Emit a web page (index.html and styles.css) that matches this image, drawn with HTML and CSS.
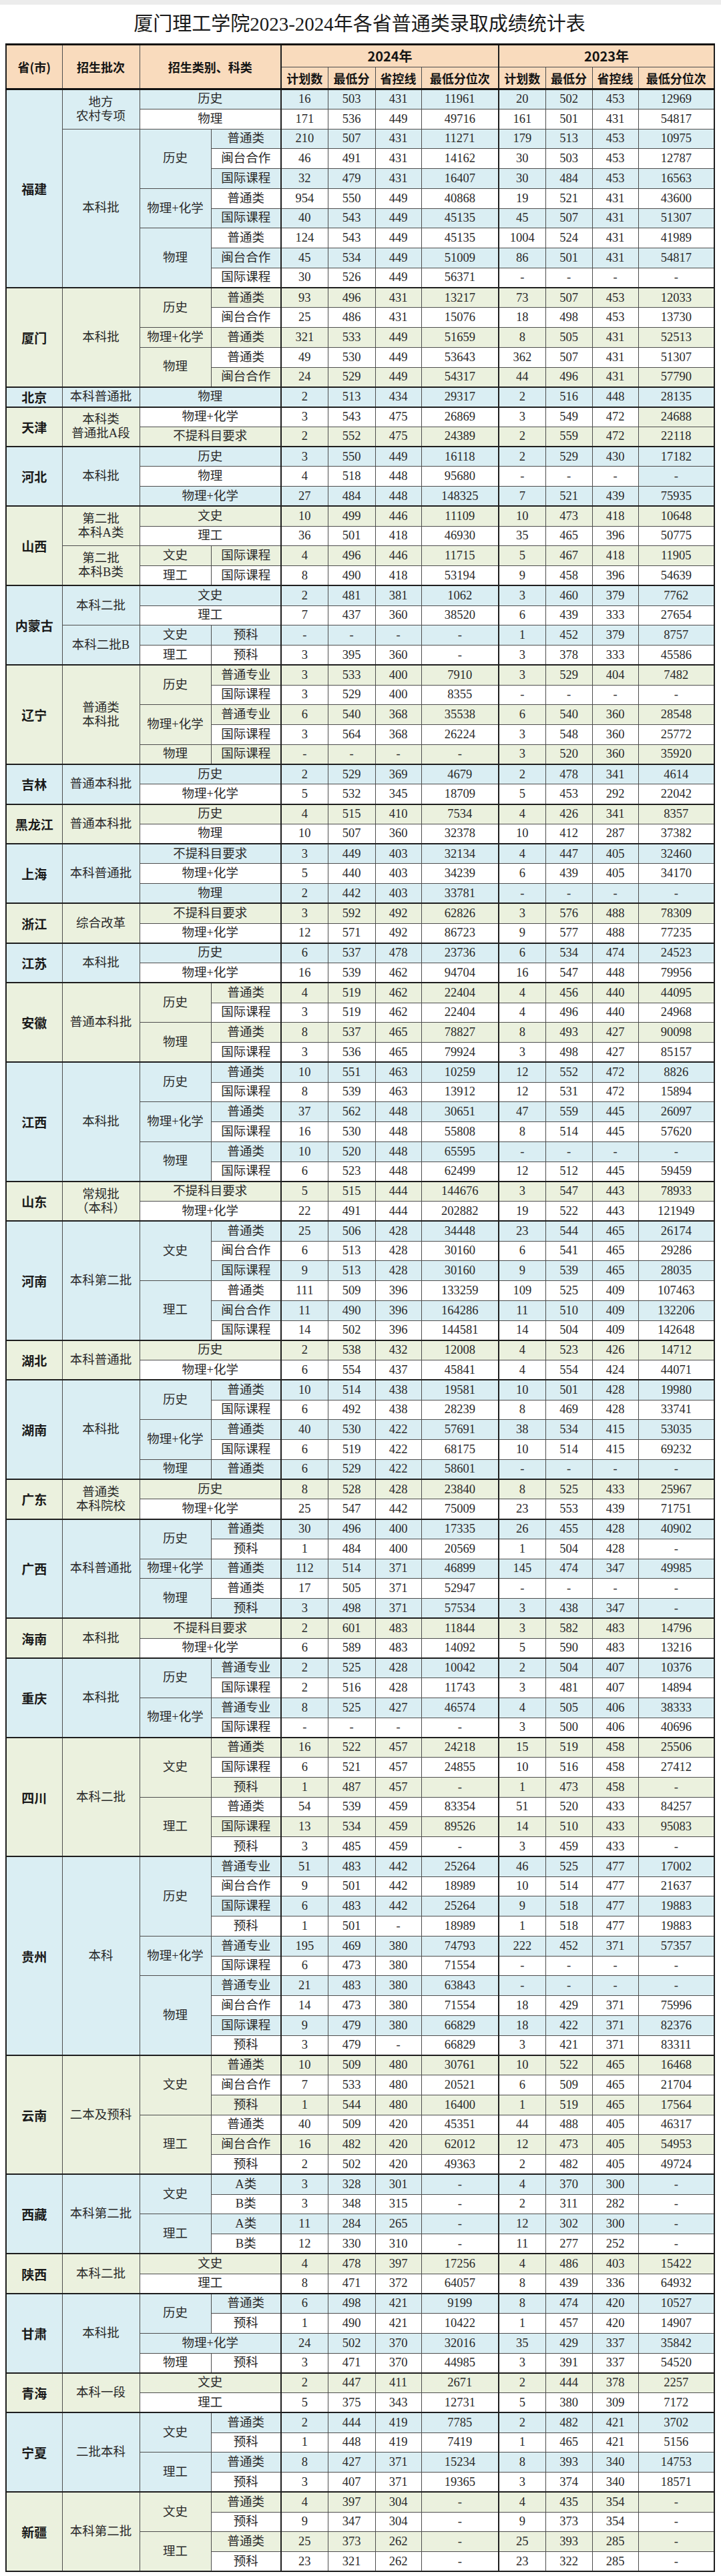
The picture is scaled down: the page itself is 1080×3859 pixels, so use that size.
FILE: index.html
```html
<!DOCTYPE html>
<html lang="zh-CN">
<head>
<meta charset="utf-8">
<title>厦门理工学院2023-2024年各省普通类录取成绩统计表</title>
<link rel="stylesheet" href="styles.css">
</head>
<body>
<div class="page">
<h1 class="title">厦门理工学院2023-2024年各省普通类录取成绩统计表</h1>
<table class="grid">
<colgroup><col class="k-prov"><col class="k-batch"><col class="k-cat"><col class="k-sub"><col class="k-n sep"><col class="k-n2"><col class="k-n3"><col class="k-r"><col class="k-n sep"><col class="k-n"><col class="k-n3"><col class="k-r2"></colgroup>
<thead>
<tr class="h1"><th rowspan="2">省(市)</th><th rowspan="2">招生批次</th><th rowspan="2" colspan="2">招生类别、科类</th><th colspan="4" class="yr">2024年</th><th colspan="4" class="yr">2023年</th></tr>
<tr class="h2"><th>计划数</th><th>最低分</th><th>省控线</th><th>最低分位次</th><th>计划数</th><th>最低分</th><th>省控线</th><th>最低分位次</th></tr>
</thead>
<tbody class="b">
<tr class="s"><td class="p g" rowspan="10">福建</td><td class="g" rowspan="2">地方<br>农村专项</td><td colspan="2">历史</td><td>16</td><td>503</td><td>431</td><td>11961</td><td>20</td><td>502</td><td>453</td><td>12969</td></tr>
<tr><td colspan="2">物理</td><td>171</td><td>536</td><td>449</td><td>49716</td><td>161</td><td>501</td><td>431</td><td>54817</td></tr>
<tr class="s"><td class="g" rowspan="8">本科批</td><td class="g" rowspan="3">历史</td><td>普通类</td><td>210</td><td>507</td><td>431</td><td>11271</td><td>179</td><td>513</td><td>453</td><td>10975</td></tr>
<tr><td>闽台合作</td><td>46</td><td>491</td><td>431</td><td>14162</td><td>30</td><td>503</td><td>453</td><td>12787</td></tr>
<tr class="s"><td>国际课程</td><td>32</td><td>479</td><td>431</td><td>16407</td><td>30</td><td>484</td><td>453</td><td>16563</td></tr>
<tr><td class="g" rowspan="2">物理+化学</td><td>普通类</td><td>954</td><td>550</td><td>449</td><td>40868</td><td>19</td><td>521</td><td>431</td><td>43600</td></tr>
<tr class="s"><td>国际课程</td><td>40</td><td>543</td><td>449</td><td>45135</td><td>45</td><td>507</td><td>431</td><td>51307</td></tr>
<tr><td class="g" rowspan="3">物理</td><td>普通类</td><td>124</td><td>543</td><td>449</td><td>45135</td><td>1004</td><td>524</td><td>431</td><td>41989</td></tr>
<tr class="s"><td>闽台合作</td><td>45</td><td>534</td><td>449</td><td>51009</td><td>86</td><td>501</td><td>431</td><td>54817</td></tr>
<tr><td>国际课程</td><td>30</td><td>526</td><td>449</td><td>56371</td><td>-</td><td>-</td><td>-</td><td>-</td></tr>
</tbody>
<tbody class="e">
<tr class="s"><td class="p g" rowspan="5">厦门</td><td class="g" rowspan="5">本科批</td><td class="g" rowspan="2">历史</td><td>普通类</td><td>93</td><td>496</td><td>431</td><td>13217</td><td>73</td><td>507</td><td>453</td><td>12033</td></tr>
<tr><td>闽台合作</td><td>25</td><td>486</td><td>431</td><td>15076</td><td>18</td><td>498</td><td>453</td><td>13730</td></tr>
<tr class="s"><td>物理+化学</td><td>普通类</td><td>321</td><td>533</td><td>449</td><td>51659</td><td>8</td><td>505</td><td>431</td><td>52513</td></tr>
<tr><td class="g" rowspan="2">物理</td><td>普通类</td><td>49</td><td>530</td><td>449</td><td>53643</td><td>362</td><td>507</td><td>431</td><td>51307</td></tr>
<tr class="s"><td>闽台合作</td><td>24</td><td>529</td><td>449</td><td>54317</td><td>44</td><td>496</td><td>431</td><td>57790</td></tr>
</tbody>
<tbody class="b">
<tr class="s"><td class="p g">北京</td><td class="g">本科普通批</td><td colspan="2">物理</td><td>2</td><td>513</td><td>434</td><td>29317</td><td>2</td><td>516</td><td>448</td><td>28135</td></tr>
</tbody>
<tbody class="e">
<tr><td class="p g" rowspan="2">天津</td><td class="g" rowspan="2">本科类<br>普通批A段</td><td colspan="2">物理+化学</td><td>3</td><td>543</td><td>475</td><td>26869</td><td>3</td><td>549</td><td>472</td><td class="g">24688</td></tr>
<tr class="s"><td colspan="2">不提科目要求</td><td>2</td><td>552</td><td>475</td><td>24389</td><td>2</td><td>559</td><td>472</td><td>22118</td></tr>
</tbody>
<tbody class="b">
<tr class="s"><td class="p g" rowspan="3">河北</td><td class="g" rowspan="3">本科批</td><td colspan="2">历史</td><td>3</td><td>550</td><td>449</td><td>16118</td><td>2</td><td>529</td><td>430</td><td>17182</td></tr>
<tr><td colspan="2">物理</td><td>4</td><td>518</td><td>448</td><td>95680</td><td>-</td><td>-</td><td>-</td><td class="g">-</td></tr>
<tr class="s"><td colspan="2">物理+化学</td><td>27</td><td>484</td><td>448</td><td>148325</td><td>7</td><td>521</td><td>439</td><td>75935</td></tr>
</tbody>
<tbody class="e">
<tr class="s"><td class="p g" rowspan="4">山西</td><td class="g" rowspan="2">第二批<br>本科A类</td><td colspan="2">文史</td><td>10</td><td>499</td><td>446</td><td>11109</td><td>10</td><td>473</td><td>418</td><td>10648</td></tr>
<tr><td colspan="2">理工</td><td>36</td><td>501</td><td>418</td><td>46930</td><td>35</td><td>465</td><td>396</td><td>50775</td></tr>
<tr class="s"><td class="g" rowspan="2">第二批<br>本科B类</td><td>文史</td><td>国际课程</td><td>4</td><td>496</td><td>446</td><td>11715</td><td>5</td><td>467</td><td>418</td><td>11905</td></tr>
<tr><td>理工</td><td>国际课程</td><td>8</td><td>490</td><td>418</td><td>53194</td><td>9</td><td>458</td><td>396</td><td>54639</td></tr>
</tbody>
<tbody class="b">
<tr class="s"><td class="p g" rowspan="4">内蒙古</td><td class="g" rowspan="2">本科二批</td><td colspan="2">文史</td><td>2</td><td>481</td><td>381</td><td>1062</td><td>3</td><td>460</td><td>379</td><td>7762</td></tr>
<tr><td colspan="2">理工</td><td>7</td><td>437</td><td>360</td><td>38520</td><td>6</td><td>439</td><td>333</td><td>27654</td></tr>
<tr class="s"><td class="g" rowspan="2">本科二批B</td><td>文史</td><td>预科</td><td>-</td><td>-</td><td>-</td><td>-</td><td>1</td><td>452</td><td>379</td><td>8757</td></tr>
<tr><td>理工</td><td>预科</td><td>3</td><td>395</td><td>360</td><td>-</td><td>3</td><td>378</td><td>333</td><td>45586</td></tr>
</tbody>
<tbody class="e">
<tr class="s"><td class="p g" rowspan="5">辽宁</td><td class="g" rowspan="5">普通类<br>本科批</td><td class="g" rowspan="2">历史</td><td>普通专业</td><td>3</td><td>533</td><td>400</td><td>7910</td><td>3</td><td>529</td><td>404</td><td>7482</td></tr>
<tr><td>国际课程</td><td>3</td><td>529</td><td>400</td><td>8355</td><td>-</td><td>-</td><td>-</td><td>-</td></tr>
<tr class="s"><td class="g" rowspan="2">物理+化学</td><td>普通专业</td><td>6</td><td>540</td><td>368</td><td>35538</td><td>6</td><td>540</td><td>360</td><td>28548</td></tr>
<tr><td>国际课程</td><td>3</td><td>564</td><td>368</td><td>26224</td><td>3</td><td>548</td><td>360</td><td>25772</td></tr>
<tr class="s"><td>物理</td><td>国际课程</td><td>-</td><td>-</td><td>-</td><td>-</td><td>3</td><td>520</td><td>360</td><td>35920</td></tr>
</tbody>
<tbody class="b">
<tr class="s"><td class="p g" rowspan="2">吉林</td><td class="g" rowspan="2">普通本科批</td><td colspan="2">历史</td><td>2</td><td>529</td><td>369</td><td>4679</td><td>2</td><td>478</td><td>341</td><td>4614</td></tr>
<tr><td colspan="2">物理+化学</td><td>5</td><td>532</td><td>345</td><td>18709</td><td>5</td><td>453</td><td>292</td><td>22042</td></tr>
</tbody>
<tbody class="e">
<tr class="s"><td class="p g" rowspan="2">黑龙江</td><td class="g" rowspan="2">普通本科批</td><td colspan="2">历史</td><td>4</td><td>515</td><td>410</td><td>7534</td><td>4</td><td>426</td><td>341</td><td>8357</td></tr>
<tr><td colspan="2">物理</td><td>10</td><td>507</td><td>360</td><td>32378</td><td>10</td><td>412</td><td>287</td><td>37382</td></tr>
</tbody>
<tbody class="b">
<tr class="s"><td class="p g" rowspan="3">上海</td><td class="g" rowspan="3">本科普通批</td><td colspan="2">不提科目要求</td><td>3</td><td>449</td><td>403</td><td>32134</td><td>4</td><td>447</td><td>405</td><td>32460</td></tr>
<tr><td colspan="2">物理+化学</td><td>5</td><td>440</td><td>403</td><td>34239</td><td>6</td><td>439</td><td>405</td><td>34170</td></tr>
<tr class="s"><td colspan="2">物理</td><td>2</td><td>442</td><td>403</td><td>33781</td><td>-</td><td>-</td><td>-</td><td>-</td></tr>
</tbody>
<tbody class="e">
<tr class="s"><td class="p g" rowspan="2">浙江</td><td class="g" rowspan="2">综合改革</td><td colspan="2">不提科目要求</td><td>3</td><td>592</td><td>492</td><td>62826</td><td>3</td><td>576</td><td>488</td><td>78309</td></tr>
<tr><td colspan="2">物理+化学</td><td>12</td><td>571</td><td>492</td><td>86723</td><td>9</td><td>577</td><td>488</td><td>77235</td></tr>
</tbody>
<tbody class="b">
<tr class="s"><td class="p g" rowspan="2">江苏</td><td class="g" rowspan="2">本科批</td><td colspan="2">历史</td><td>6</td><td>537</td><td>478</td><td>23736</td><td>6</td><td>534</td><td>474</td><td>24523</td></tr>
<tr><td colspan="2">物理+化学</td><td>16</td><td>539</td><td>462</td><td>94704</td><td>16</td><td>547</td><td>448</td><td>79956</td></tr>
</tbody>
<tbody class="e">
<tr class="s"><td class="p g" rowspan="4">安徽</td><td class="g" rowspan="4">普通本科批</td><td class="g" rowspan="2">历史</td><td>普通类</td><td>4</td><td>519</td><td>462</td><td>22404</td><td>4</td><td>456</td><td>440</td><td>44095</td></tr>
<tr><td>国际课程</td><td>3</td><td>519</td><td>462</td><td>22404</td><td>4</td><td>496</td><td>440</td><td>24968</td></tr>
<tr class="s"><td class="g" rowspan="2">物理</td><td>普通类</td><td>8</td><td>537</td><td>465</td><td>78827</td><td>8</td><td>493</td><td>427</td><td>90098</td></tr>
<tr><td>国际课程</td><td>3</td><td>536</td><td>465</td><td>79924</td><td>3</td><td>498</td><td>427</td><td>85157</td></tr>
</tbody>
<tbody class="b">
<tr class="s"><td class="p g" rowspan="6">江西</td><td class="g" rowspan="6">本科批</td><td class="g" rowspan="2">历史</td><td>普通类</td><td>10</td><td>551</td><td>463</td><td>10259</td><td>12</td><td>552</td><td>472</td><td>8826</td></tr>
<tr><td>国际课程</td><td>8</td><td>539</td><td>463</td><td>13912</td><td>12</td><td>531</td><td>472</td><td>15894</td></tr>
<tr class="s"><td class="g" rowspan="2">物理+化学</td><td>普通类</td><td>37</td><td>562</td><td>448</td><td>30651</td><td>47</td><td>559</td><td>445</td><td>26097</td></tr>
<tr><td>国际课程</td><td>16</td><td>530</td><td>448</td><td>55808</td><td>8</td><td>514</td><td>445</td><td>57620</td></tr>
<tr class="s"><td class="g" rowspan="2">物理</td><td>普通类</td><td>10</td><td>520</td><td>448</td><td>65595</td><td>-</td><td>-</td><td>-</td><td>-</td></tr>
<tr><td>国际课程</td><td>6</td><td>523</td><td>448</td><td>62499</td><td>12</td><td>512</td><td>445</td><td>59459</td></tr>
</tbody>
<tbody class="e">
<tr class="s"><td class="p g" rowspan="2">山东</td><td class="g" rowspan="2">常规批<br>（本科）</td><td colspan="2">不提科目要求</td><td>5</td><td>515</td><td>444</td><td>144676</td><td>3</td><td>547</td><td>443</td><td>78933</td></tr>
<tr><td colspan="2">物理+化学</td><td>22</td><td>491</td><td>444</td><td>202882</td><td>19</td><td>522</td><td>443</td><td>121949</td></tr>
</tbody>
<tbody class="b">
<tr class="s"><td class="p g" rowspan="6">河南</td><td class="g" rowspan="6">本科第二批</td><td class="g" rowspan="3">文史</td><td>普通类</td><td>25</td><td>506</td><td>428</td><td>34448</td><td>23</td><td>544</td><td>465</td><td>26174</td></tr>
<tr><td>闽台合作</td><td>6</td><td>513</td><td>428</td><td>30160</td><td>6</td><td>541</td><td>465</td><td>29286</td></tr>
<tr class="s"><td>国际课程</td><td>9</td><td>513</td><td>428</td><td>30160</td><td>9</td><td>539</td><td>465</td><td>28035</td></tr>
<tr><td class="g" rowspan="3">理工</td><td>普通类</td><td>111</td><td>509</td><td>396</td><td>133259</td><td>109</td><td>525</td><td>409</td><td>107463</td></tr>
<tr class="s"><td>闽台合作</td><td>11</td><td>490</td><td>396</td><td>164286</td><td>11</td><td>510</td><td>409</td><td>132206</td></tr>
<tr><td>国际课程</td><td>14</td><td>502</td><td>396</td><td>144581</td><td>14</td><td>504</td><td>409</td><td>142648</td></tr>
</tbody>
<tbody class="e">
<tr class="s"><td class="p g" rowspan="2">湖北</td><td class="g" rowspan="2">本科普通批</td><td colspan="2">历史</td><td>2</td><td>538</td><td>432</td><td>12008</td><td>4</td><td>523</td><td>426</td><td>14712</td></tr>
<tr><td colspan="2">物理+化学</td><td>6</td><td>554</td><td>437</td><td>45841</td><td>4</td><td>554</td><td>424</td><td>44071</td></tr>
</tbody>
<tbody class="b">
<tr class="s"><td class="p g" rowspan="5">湖南</td><td class="g" rowspan="5">本科批</td><td class="g" rowspan="2">历史</td><td>普通类</td><td>10</td><td>514</td><td>438</td><td>19581</td><td>10</td><td>501</td><td>428</td><td>19980</td></tr>
<tr><td>国际课程</td><td>6</td><td>492</td><td>438</td><td>28239</td><td>8</td><td>469</td><td>428</td><td>33741</td></tr>
<tr class="s"><td class="g" rowspan="2">物理+化学</td><td>普通类</td><td>40</td><td>530</td><td>422</td><td>57691</td><td>38</td><td>534</td><td>415</td><td>53035</td></tr>
<tr><td>国际课程</td><td>6</td><td>519</td><td>422</td><td>68175</td><td>10</td><td>514</td><td>415</td><td>69232</td></tr>
<tr class="s"><td>物理</td><td>普通类</td><td>6</td><td>529</td><td>422</td><td>58601</td><td>-</td><td>-</td><td>-</td><td>-</td></tr>
</tbody>
<tbody class="e">
<tr class="s"><td class="p g" rowspan="2">广东</td><td class="g" rowspan="2">普通类<br>本科院校</td><td colspan="2">历史</td><td>8</td><td>528</td><td>428</td><td>23840</td><td>8</td><td>525</td><td>433</td><td>25967</td></tr>
<tr><td colspan="2">物理+化学</td><td>25</td><td>547</td><td>442</td><td>75009</td><td>23</td><td>553</td><td>439</td><td>71751</td></tr>
</tbody>
<tbody class="b">
<tr class="s"><td class="p g" rowspan="5">广西</td><td class="g" rowspan="5">本科普通批</td><td class="g" rowspan="2">历史</td><td>普通类</td><td>30</td><td>496</td><td>400</td><td>17335</td><td>26</td><td>455</td><td>428</td><td>40902</td></tr>
<tr><td>预科</td><td>1</td><td>484</td><td>400</td><td>20569</td><td>1</td><td>504</td><td>428</td><td>-</td></tr>
<tr class="s"><td>物理+化学</td><td>普通类</td><td>112</td><td>514</td><td>371</td><td>46899</td><td>145</td><td>474</td><td>347</td><td>49985</td></tr>
<tr><td class="g" rowspan="2">物理</td><td>普通类</td><td>17</td><td>505</td><td>371</td><td>52947</td><td>-</td><td>-</td><td>-</td><td>-</td></tr>
<tr class="s"><td>预科</td><td>3</td><td>498</td><td>371</td><td>57534</td><td>3</td><td>438</td><td>347</td><td>-</td></tr>
</tbody>
<tbody class="e">
<tr class="s"><td class="p g" rowspan="2">海南</td><td class="g" rowspan="2">本科批</td><td colspan="2">不提科目要求</td><td>2</td><td>601</td><td>483</td><td>11844</td><td>3</td><td>582</td><td>483</td><td>14796</td></tr>
<tr><td colspan="2">物理+化学</td><td>6</td><td>589</td><td>483</td><td>14092</td><td>5</td><td>590</td><td>483</td><td>13216</td></tr>
</tbody>
<tbody class="b">
<tr class="s"><td class="p g" rowspan="4">重庆</td><td class="g" rowspan="4">本科批</td><td class="g" rowspan="2">历史</td><td>普通专业</td><td>2</td><td>525</td><td>428</td><td>10042</td><td>2</td><td>504</td><td>407</td><td>10376</td></tr>
<tr><td>国际课程</td><td>2</td><td>516</td><td>428</td><td>11743</td><td>3</td><td>481</td><td>407</td><td>14894</td></tr>
<tr class="s"><td class="g" rowspan="2">物理+化学</td><td>普通专业</td><td>8</td><td>525</td><td>427</td><td>46574</td><td>4</td><td>505</td><td>406</td><td>38333</td></tr>
<tr><td>国际课程</td><td>-</td><td>-</td><td>-</td><td>-</td><td>3</td><td>500</td><td>406</td><td>40696</td></tr>
</tbody>
<tbody class="e">
<tr class="s"><td class="p g" rowspan="6">四川</td><td class="g" rowspan="6">本科二批</td><td class="g" rowspan="3">文史</td><td>普通类</td><td>16</td><td>522</td><td>457</td><td>24218</td><td>15</td><td>519</td><td>458</td><td>25506</td></tr>
<tr><td>国际课程</td><td>6</td><td>521</td><td>457</td><td>24855</td><td>10</td><td>516</td><td>458</td><td>27412</td></tr>
<tr class="s"><td>预科</td><td>1</td><td>487</td><td>457</td><td>-</td><td>1</td><td>473</td><td>458</td><td>-</td></tr>
<tr><td class="g" rowspan="3">理工</td><td>普通类</td><td>54</td><td>539</td><td>459</td><td>83354</td><td>51</td><td>520</td><td>433</td><td>84257</td></tr>
<tr class="s"><td>国际课程</td><td>13</td><td>534</td><td>459</td><td>89526</td><td>14</td><td>510</td><td>433</td><td>95083</td></tr>
<tr><td>预科</td><td>3</td><td>485</td><td>459</td><td>-</td><td>3</td><td>459</td><td>433</td><td>-</td></tr>
</tbody>
<tbody class="b">
<tr class="s"><td class="p g" rowspan="10">贵州</td><td class="g" rowspan="10">本科</td><td class="g" rowspan="4">历史</td><td>普通专业</td><td>51</td><td>483</td><td>442</td><td>25264</td><td>46</td><td>525</td><td>477</td><td>17002</td></tr>
<tr><td>闽台合作</td><td>9</td><td>501</td><td>442</td><td>18989</td><td>10</td><td>514</td><td>477</td><td>21637</td></tr>
<tr class="s"><td>国际课程</td><td>6</td><td>483</td><td>442</td><td>25264</td><td>9</td><td>518</td><td>477</td><td>19883</td></tr>
<tr><td>预科</td><td>1</td><td>501</td><td>-</td><td>18989</td><td>1</td><td>518</td><td>477</td><td>19883</td></tr>
<tr class="s"><td class="g" rowspan="2">物理+化学</td><td>普通专业</td><td>195</td><td>469</td><td>380</td><td>74793</td><td>222</td><td>452</td><td>371</td><td>57357</td></tr>
<tr><td>国际课程</td><td>6</td><td>473</td><td>380</td><td>71554</td><td>-</td><td>-</td><td>-</td><td>-</td></tr>
<tr class="s"><td class="g" rowspan="4">物理</td><td>普通专业</td><td>21</td><td>483</td><td>380</td><td>63843</td><td>-</td><td>-</td><td>-</td><td>-</td></tr>
<tr><td>闽台合作</td><td>14</td><td>473</td><td>380</td><td>71554</td><td>18</td><td>429</td><td>371</td><td>75996</td></tr>
<tr class="s"><td>国际课程</td><td>9</td><td>479</td><td>380</td><td>66829</td><td>18</td><td>422</td><td>371</td><td>82376</td></tr>
<tr><td>预科</td><td>3</td><td>479</td><td>-</td><td>66829</td><td>3</td><td>421</td><td>371</td><td>83311</td></tr>
</tbody>
<tbody class="e">
<tr class="s"><td class="p g" rowspan="6">云南</td><td class="g" rowspan="6">二本及预科</td><td class="g" rowspan="3">文史</td><td>普通类</td><td>10</td><td>509</td><td>480</td><td>30761</td><td>10</td><td>522</td><td>465</td><td>16468</td></tr>
<tr><td>闽台合作</td><td>7</td><td>533</td><td>480</td><td>20521</td><td>6</td><td>509</td><td>465</td><td>21704</td></tr>
<tr class="s"><td>预科</td><td>1</td><td>544</td><td>480</td><td>16400</td><td>1</td><td>519</td><td>465</td><td>17564</td></tr>
<tr><td class="g" rowspan="3">理工</td><td>普通类</td><td>40</td><td>509</td><td>420</td><td>45351</td><td>44</td><td>488</td><td>405</td><td>46317</td></tr>
<tr class="s"><td>闽台合作</td><td>16</td><td>482</td><td>420</td><td>62012</td><td>12</td><td>473</td><td>405</td><td>54953</td></tr>
<tr><td>预科</td><td>2</td><td>502</td><td>420</td><td>49363</td><td>2</td><td>482</td><td>405</td><td>49724</td></tr>
</tbody>
<tbody class="b">
<tr class="s"><td class="p g" rowspan="4">西藏</td><td class="g" rowspan="4">本科第二批</td><td class="g" rowspan="2">文史</td><td>A类</td><td>3</td><td>328</td><td>301</td><td>-</td><td>4</td><td>370</td><td>300</td><td>-</td></tr>
<tr><td>B类</td><td>3</td><td>348</td><td>315</td><td>-</td><td>2</td><td>311</td><td>282</td><td>-</td></tr>
<tr class="s"><td class="g" rowspan="2">理工</td><td>A类</td><td>11</td><td>284</td><td>265</td><td>-</td><td>12</td><td>302</td><td>300</td><td>-</td></tr>
<tr><td>B类</td><td>12</td><td>330</td><td>310</td><td>-</td><td>11</td><td>277</td><td>252</td><td>-</td></tr>
</tbody>
<tbody class="e">
<tr class="s"><td class="p g" rowspan="2">陕西</td><td class="g" rowspan="2">本科二批</td><td colspan="2">文史</td><td>4</td><td>478</td><td>397</td><td>17256</td><td>4</td><td>486</td><td>403</td><td>15422</td></tr>
<tr><td colspan="2">理工</td><td>8</td><td>471</td><td>372</td><td>64057</td><td>8</td><td>439</td><td>336</td><td>64932</td></tr>
</tbody>
<tbody class="b">
<tr class="s"><td class="p g" rowspan="4">甘肃</td><td class="g" rowspan="4">本科批</td><td class="g" rowspan="2">历史</td><td>普通类</td><td>6</td><td>498</td><td>421</td><td>9199</td><td>8</td><td>474</td><td>420</td><td>10527</td></tr>
<tr><td>预科</td><td>1</td><td>490</td><td>421</td><td>10422</td><td>1</td><td>457</td><td>420</td><td>14907</td></tr>
<tr class="s"><td colspan="2">物理+化学</td><td>24</td><td>502</td><td>370</td><td>32016</td><td>35</td><td>429</td><td>337</td><td>35842</td></tr>
<tr><td>物理</td><td>预科</td><td>3</td><td>471</td><td>370</td><td>44985</td><td>3</td><td>391</td><td>337</td><td>54520</td></tr>
</tbody>
<tbody class="e">
<tr class="s"><td class="p g" rowspan="2">青海</td><td class="g" rowspan="2">本科一段</td><td colspan="2">文史</td><td>2</td><td>447</td><td>411</td><td>2671</td><td>2</td><td>444</td><td>378</td><td>2257</td></tr>
<tr><td colspan="2">理工</td><td>5</td><td>375</td><td>343</td><td>12731</td><td>5</td><td>380</td><td>309</td><td>7172</td></tr>
</tbody>
<tbody class="b">
<tr class="s"><td class="p g" rowspan="4">宁夏</td><td class="g" rowspan="4">二批本科</td><td class="g" rowspan="2">文史</td><td>普通类</td><td>2</td><td>444</td><td>419</td><td>7785</td><td>2</td><td>482</td><td>421</td><td>3702</td></tr>
<tr><td>预科</td><td>1</td><td>448</td><td>419</td><td>7419</td><td>1</td><td>465</td><td>421</td><td>5156</td></tr>
<tr class="s"><td class="g" rowspan="2">理工</td><td>普通类</td><td>8</td><td>427</td><td>371</td><td>15234</td><td>8</td><td>393</td><td>340</td><td>14753</td></tr>
<tr><td>预科</td><td>3</td><td>407</td><td>371</td><td>19365</td><td>3</td><td>374</td><td>340</td><td>18571</td></tr>
</tbody>
<tbody class="e">
<tr class="s"><td class="p g" rowspan="4">新疆</td><td class="g" rowspan="4">本科第二批</td><td class="g" rowspan="2">文史</td><td>普通类</td><td>4</td><td>397</td><td>304</td><td>-</td><td>4</td><td>435</td><td>354</td><td>-</td></tr>
<tr><td>预科</td><td>9</td><td>347</td><td>304</td><td>-</td><td>9</td><td>373</td><td>354</td><td>-</td></tr>
<tr class="s"><td class="g" rowspan="2">理工</td><td>普通类</td><td>25</td><td>373</td><td>262</td><td>-</td><td>25</td><td>393</td><td>285</td><td>-</td></tr>
<tr><td>预科</td><td>23</td><td>321</td><td>262</td><td>-</td><td>23</td><td>322</td><td>285</td><td>-</td></tr>
</tbody>
</table>
</div>
</body>
</html>
```

FILE: styles.css
```css
html, body {
  margin: 0;
  padding: 0;
  background: #ffffff;
}

body {
  font-family: "Liberation Serif", "Noto Sans CJK SC", serif;
  color: #222222;
  border-top: 7px solid #ececec;
}

.page {
  padding: 1px 0 0 8px;
}

.title {
  margin: 0;
  width: 1061px;
  height: 57px;
  line-height: 57px;
  text-align: center;
  font-size: 29px;
  font-weight: 400;
  color: #1a1a1a;
  font-family: "Liberation Serif", "Noto Sans CJK SC", serif;
}

.grid {
  border-collapse: collapse;
  table-layout: fixed;
  width: 1061px;
  border: 2px solid #1e1e1e;
}

.k-prov { width: 84px; }
.k-batch { width: 116px; }
.k-cat { width: 107px; }
.k-sub { width: 105px; }
.k-n { width: 70px; }
.k-n2 { width: 71px; }
.k-n3 { width: 69px; }
.k-r { width: 116px; }
.k-r2 { width: 114px; }

.sep { border-left: 2px solid #1e1e1e; }

.grid th,
.grid td {
  border: 1px solid #4d4d4d;
  padding: 0;
  text-align: center;
  vertical-align: middle;
  white-space: nowrap;
}

.grid thead {
  border-top: 3px solid #111111;
  border-bottom: 3px solid #111111;
}

.grid th {
  background: #f9dbbd;
  font-family: "Noto Sans CJK SC", sans-serif;
  font-weight: 700;
  font-size: 18px;
  line-height: 22px;
  color: #141414;
}

.grid th.yr {
  font-size: 20px;
}

.grid .h1 { height: 34px; }
.grid .h2 { height: 33px; }

.grid tbody {
  border-top: 2px solid #1e1e1e;
}

.grid tbody tr {
  height: 29.75px;
}

.grid td {
  font-size: 18.5px;
  line-height: 21px;
  color: #2a2a2a;
}

.grid td.p {
  font-family: "Noto Sans CJK SC", sans-serif;
  font-weight: 700;
  font-size: 19px;
  color: #1a1a1a;
}

tbody.b { --c: #daeef3; }
tbody.e { --c: #ebf1de; }

.grid tr.s td,
.grid td.g {
  background: var(--c);
}
```
